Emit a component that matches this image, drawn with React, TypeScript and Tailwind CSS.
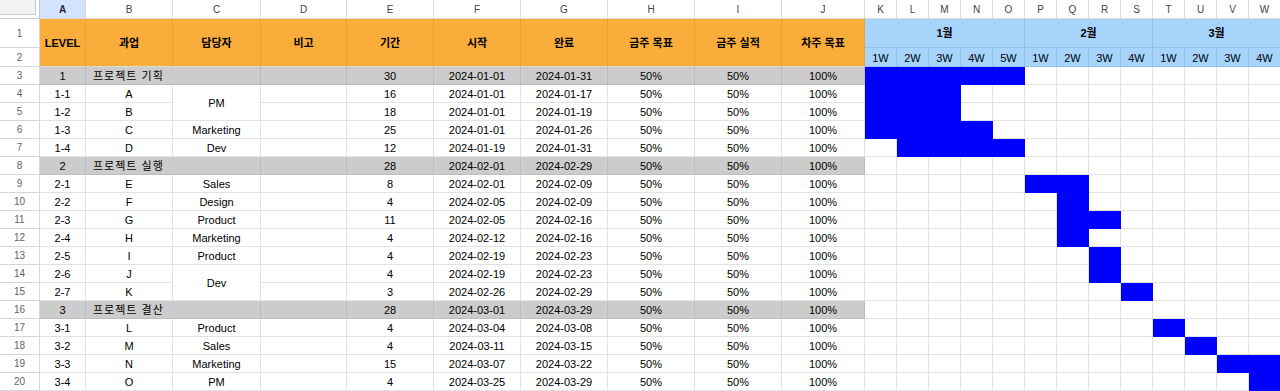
import React from "react";

type Row = {
    n: number;
    group?: boolean;
    a: string;
    b: string;
    c?: string;
    span?: boolean;
    skip?: boolean;
    e: string;
    f: string;
    t: string;
    bars: number[];
};

const rows: Row[] = [
    { n: 3, group: true, a: "1", b: "프로젝트 기획", e: "30", f: "2024-01-01", t: "2024-01-31", bars: [0, 1, 2, 3, 4] },
    { n: 4, a: "1-1", b: "A", c: "PM", span: true, e: "16", f: "2024-01-01", t: "2024-01-17", bars: [0, 1, 2] },
    { n: 5, a: "1-2", b: "B", skip: true, e: "18", f: "2024-01-01", t: "2024-01-19", bars: [0, 1, 2] },
    { n: 6, a: "1-3", b: "C", c: "Marketing", e: "25", f: "2024-01-01", t: "2024-01-26", bars: [0, 1, 2, 3] },
    { n: 7, a: "1-4", b: "D", c: "Dev", e: "12", f: "2024-01-19", t: "2024-01-31", bars: [1, 2, 3, 4] },
    { n: 8, group: true, a: "2", b: "프로젝트 실행", e: "28", f: "2024-02-01", t: "2024-02-29", bars: [] },
    { n: 9, a: "2-1", b: "E", c: "Sales", e: "8", f: "2024-02-01", t: "2024-02-09", bars: [5, 6] },
    { n: 10, a: "2-2", b: "F", c: "Design", e: "4", f: "2024-02-05", t: "2024-02-09", bars: [6] },
    { n: 11, a: "2-3", b: "G", c: "Product", e: "11", f: "2024-02-05", t: "2024-02-16", bars: [6, 7] },
    { n: 12, a: "2-4", b: "H", c: "Marketing", e: "4", f: "2024-02-12", t: "2024-02-16", bars: [6] },
    { n: 13, a: "2-5", b: "I", c: "Product", e: "4", f: "2024-02-19", t: "2024-02-23", bars: [7] },
    { n: 14, a: "2-6", b: "J", c: "Dev", span: true, e: "4", f: "2024-02-19", t: "2024-02-23", bars: [7] },
    { n: 15, a: "2-7", b: "K", skip: true, e: "3", f: "2024-02-26", t: "2024-02-29", bars: [8] },
    { n: 16, group: true, a: "3", b: "프로젝트 결산", e: "28", f: "2024-03-01", t: "2024-03-29", bars: [] },
    { n: 17, a: "3-1", b: "L", c: "Product", e: "4", f: "2024-03-04", t: "2024-03-08", bars: [9] },
    { n: 18, a: "3-2", b: "M", c: "Sales", e: "4", f: "2024-03-11", t: "2024-03-15", bars: [10] },
    { n: 19, a: "3-3", b: "N", c: "Marketing", e: "15", f: "2024-03-07", t: "2024-03-22", bars: [11, 12] },
    { n: 20, a: "3-4", b: "O", c: "PM", e: "4", f: "2024-03-25", t: "2024-03-29", bars: [12] },
];

const letters = ["A", "B", "C", "D", "E", "F", "G", "H", "I", "J", "K", "L", "M", "N", "O", "P", "Q", "R", "S", "T", "U", "V", "W"];
const heads = ["LEVEL", "과업", "담당자", "비고", "기간", "시작", "완료", "금주 목표", "금주 실적", "차주 목표"];
const weeks = ["1W", "2W", "3W", "4W", "5W", "1W", "2W", "3W", "4W", "1W", "2W", "3W", "4W"];

const base = "flex items-center justify-center overflow-hidden whitespace-nowrap border-r border-b";
const plain = `${base} border-[#e2e2e2] bg-white pt-[2px]`;
const gray = `${base} border-[#bdbdbd] bg-[#cccccc] pt-[2px]`;
const rowNum = `${base} border-[#d6d6d6] bg-white text-[10px] text-[#5f6368]`;

const App = () => {
    return (
        <div className="w-[1280px] h-[391px] overflow-hidden bg-white text-[11px] text-black font-['Liberation_Sans','Noto_Sans_CJK_KR',sans-serif]">
            <div className="grid w-[1281px] grid-cols-[40px_46px_87px_88px_86px_87px_87px_87px_87px_87px_83px_repeat(13,32px)] grid-rows-[19px_29px_19px_repeat(18,18px)]">
                {/* column letters */}
                <div className="border-r border-b border-[#c7c7c7] bg-white">
                    <div className="w-[36px] h-[15px] bg-[#f1f3f4] border-r border-b border-[#c4c7c5]" />
                </div>
                {letters.map((l) => (
                    <div
                        key={l}
                        className={`${base} border-[#dadada] text-[10px] ${l === "A" ? "bg-[#d3e3fd] text-[#1f2a44] font-bold" : "bg-white text-[#444]"}`}
                    >
                        {l}
                    </div>
                ))}

                {/* header row 1 */}
                <div className={rowNum}>1</div>
                {heads.map((h) => (
                    <div key={h} className={`${base} row-span-2 bg-[#fbad3c] border-r-[#eaa13a] border-b-[#d9d9d9] font-bold pt-[2px]`}>
                        {h}
                    </div>
                ))}
                <div className={`${base} col-span-5 bg-[#a6d4fb] border-[#8fc1ec] font-bold`}>1월</div>
                <div className={`${base} col-span-4 bg-[#a6d4fb] border-[#8fc1ec] font-bold`}>2월</div>
                <div className={`${base} col-span-4 bg-[#a6d4fb] border-[#8fc1ec] font-bold`}>3월</div>

                {/* header row 2 */}
                <div className={rowNum}>2</div>
                {weeks.map((w, i) => (
                    <div key={i} className={`${base} bg-[#a6d4fb] border-[#8fc1ec] pt-[2px]`}>
                        {w}
                    </div>
                ))}

                {/* data rows */}
                {rows.map((r) => {
                    const cell = r.group ? gray : plain;
                    return (
                        <React.Fragment key={r.n}>
                            <div className={rowNum}>{r.n}</div>
                            <div className={cell}>{r.a}</div>
                            {r.group ? (
                                <div className={`${gray} col-span-2 justify-start pl-[7px] tracking-[1px]`}>{r.b}</div>
                            ) : (
                                <>
                                    <div className={plain}>{r.b}</div>
                                    {!r.skip && <div className={`${plain} ${r.span ? "row-span-2" : ""}`}>{r.c}</div>}
                                </>
                            )}
                            <div className={cell}></div>
                            <div className={cell}>{r.e}</div>
                            <div className={cell}>{r.f}</div>
                            <div className={cell}>{r.t}</div>
                            <div className={cell}>50%</div>
                            <div className={cell}>50%</div>
                            <div className={cell}>100%</div>
                            {weeks.map((_, i) => (
                                <div
                                    key={i}
                                    className={`border-r border-b ${r.bars.includes(i) ? "bg-[#0000ff] border-[#0000ff]" : "bg-white border-[#e2e2e2]"}`}
                                />
                            ))}
                        </React.Fragment>
                    );
                })}
            </div>
        </div>
    );
};

export default App;
